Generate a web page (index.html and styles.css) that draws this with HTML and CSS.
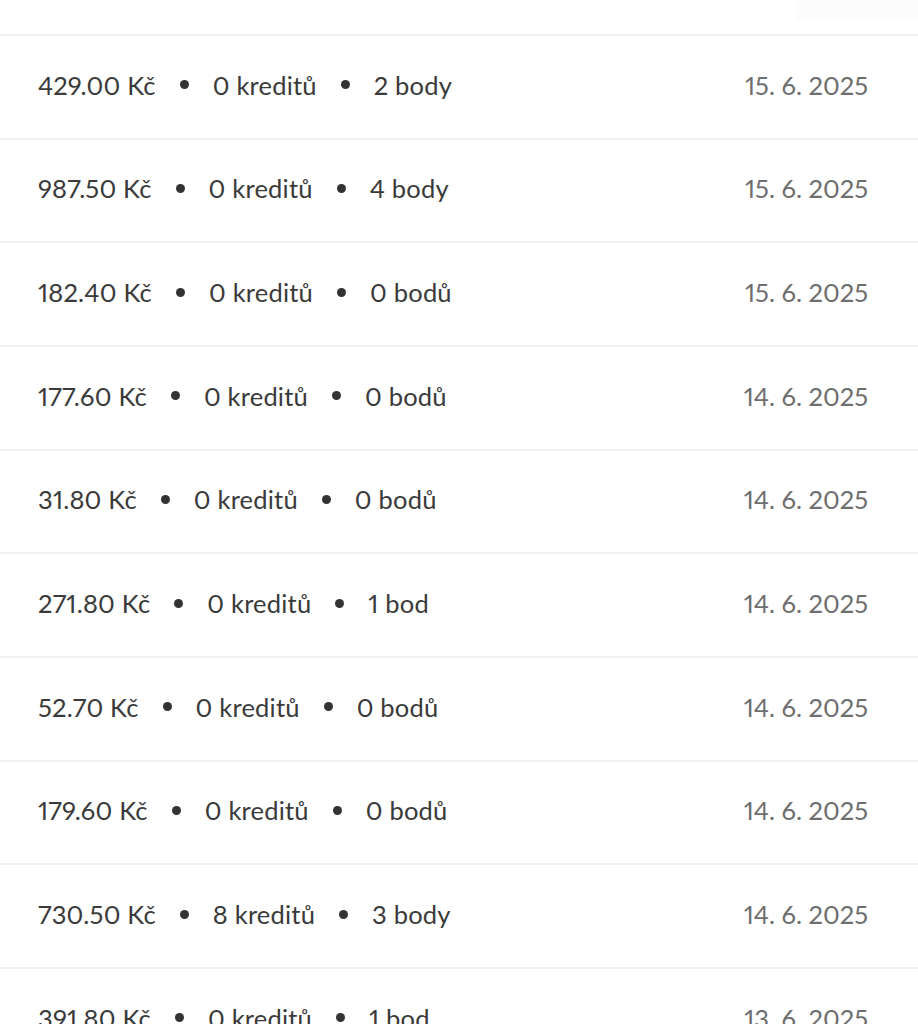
FILE: index.html
```html
<!DOCTYPE html>
<html lang="cs">
<head>
<meta charset="utf-8">
<link rel="stylesheet" href="styles.css">
</head>
<body>
<div class="list">
  <div class="row row-partial"><span class="tab"></span></div>
  <div class="row"><div class="info"><span>429.00 Kč</span><i class="dot"></i><span>0 kreditů</span><i class="dot"></i><span>2 body</span></div><div class="date">15. 6. 2025</div></div>
  <div class="row"><div class="info"><span>987.50 Kč</span><i class="dot"></i><span>0 kreditů</span><i class="dot"></i><span>4 body</span></div><div class="date">15. 6. 2025</div></div>
  <div class="row"><div class="info"><span>182.40 Kč</span><i class="dot"></i><span>0 kreditů</span><i class="dot"></i><span>0 bodů</span></div><div class="date">15. 6. 2025</div></div>
  <div class="row"><div class="info"><span>177.60 Kč</span><i class="dot"></i><span>0 kreditů</span><i class="dot"></i><span>0 bodů</span></div><div class="date">14. 6. 2025</div></div>
  <div class="row"><div class="info"><span>31.80 Kč</span><i class="dot"></i><span>0 kreditů</span><i class="dot"></i><span>0 bodů</span></div><div class="date">14. 6. 2025</div></div>
  <div class="row"><div class="info"><span>271.80 Kč</span><i class="dot"></i><span>0 kreditů</span><i class="dot"></i><span>1 bod</span></div><div class="date">14. 6. 2025</div></div>
  <div class="row"><div class="info"><span>52.70 Kč</span><i class="dot"></i><span>0 kreditů</span><i class="dot"></i><span>0 bodů</span></div><div class="date">14. 6. 2025</div></div>
  <div class="row"><div class="info"><span>179.60 Kč</span><i class="dot"></i><span>0 kreditů</span><i class="dot"></i><span>0 bodů</span></div><div class="date">14. 6. 2025</div></div>
  <div class="row"><div class="info"><span>730.50 Kč</span><i class="dot"></i><span>8 kreditů</span><i class="dot"></i><span>3 body</span></div><div class="date">14. 6. 2025</div></div>
  <div class="row"><div class="info"><span>391.80 Kč</span><i class="dot"></i><span>0 kreditů</span><i class="dot"></i><span>1 bod</span></div><div class="date">13. 6. 2025</div></div>
</div>
</body>
</html>
```
FILE: styles.css
```css
html, body {
  margin: 0;
  padding: 0;
  background: #ffffff;
  overflow: hidden;
}
body {
  font-family: "Lato", "Open Sans", sans-serif;
  color: #3a3a3a;
  font-variant-numeric: proportional-nums;
}
.list {
  display: flex;
  flex-direction: column;
}
.row {
  box-sizing: border-box;
  height: 103.67px;
  flex: none;
  display: flex;
  align-items: center;
  justify-content: space-between;
  padding: 0 50px 4px 38px;
  border-bottom: 2px solid #f0f0f0;
  font-size: 25.5px;
}
.row-partial {
  height: 36px;
  justify-content: flex-end;
  align-items: flex-start;
  padding: 0;
}
.tab {
  width: 123px;
  height: 20px;
  background: #fcfcfc;
}
.info {
  display: flex;
  align-items: center;
  gap: 24px;
  letter-spacing: 0.2px;
}
.dot {
  display: block;
  width: 9px;
  height: 9px;
  border-radius: 50%;
  background: #333333;
}
.date {
  color: #6e6e6e;
}
```
